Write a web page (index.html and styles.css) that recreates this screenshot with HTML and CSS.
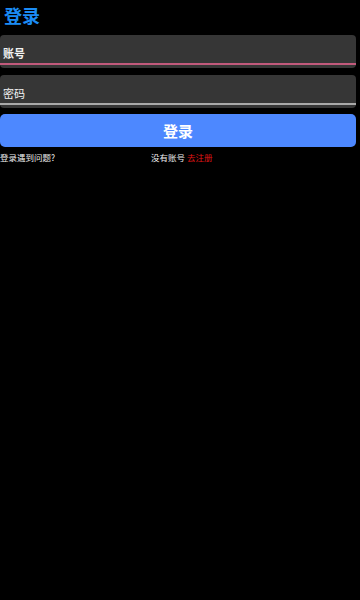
FILE: index.html
```html
<!DOCTYPE html>
<html lang="zh">
<head>
  <meta charset="UTF-8">
  <title>登录</title>
  <link rel="stylesheet" href="styles.css">
</head>
<body>
  <h1 class="title">登录</h1>

  <form class="login-form">
    <div class="field">
      <div class="field-inner field-active">
        <span class="field-label bold">账号</span>
      </div>
    </div>
    <div class="field">
      <div class="field-inner">
        <span class="field-label">密码</span>
      </div>
    </div>
    <button type="button" class="login-button">登录</button>
  </form>

  <div class="links">
    <span class="links-left">登录遇到问题?</span>
    <span>没有账号 <span class="register">去注册</span></span>
  </div>
</body>
</html>
```

FILE: styles.css
```css
body {
  margin: 0;
  padding: 0;
  background: #000;
  color: #fff;
  font-family: "Noto Sans CJK SC", "Noto Sans", sans-serif;
  width: 360px;
  height: 600px;
}

.title {
  margin: 0;
  padding: 3px 0 0 4px;
  height: 32px;
  box-sizing: border-box;
  font-size: 18px;
  line-height: 24px;
  font-weight: bold;
  color: #1b8cf5;
}

.login-form {
  margin: 0 4px 0 0;
}

.field {
  background: #363636;
  border-radius: 4px;
  padding-bottom: 3px;
  margin-top: 3px;
  margin-bottom: 7px;
}

.field-inner {
  height: 30px;
  box-sizing: border-box;
  padding: 11px 0 0 3px;
  border-bottom: 2px solid #a9a9a9;
}

.field-active {
  border-bottom-color: #c25a7c;
}

.field-label {
  display: block;
  font-size: 11px;
  line-height: 14px;
  color: #f2f2f2;
}

.bold {
  font-weight: bold;
}

.login-button {
  display: block;
  width: 100%;
  height: 33px;
  margin-top: -1px;
  border: none;
  border-radius: 5px;
  background: #4d88ff;
  color: #fff;
  font-family: inherit;
  font-size: 15px;
  font-weight: bold;
  padding: 0;
}

.links {
  display: flex;
  margin-top: 4px;
  font-size: 8.5px;
  line-height: 12px;
  color: #eee;
}

.links-left {
  width: 151px;
}

.register {
  color: #e01515;
}
```
